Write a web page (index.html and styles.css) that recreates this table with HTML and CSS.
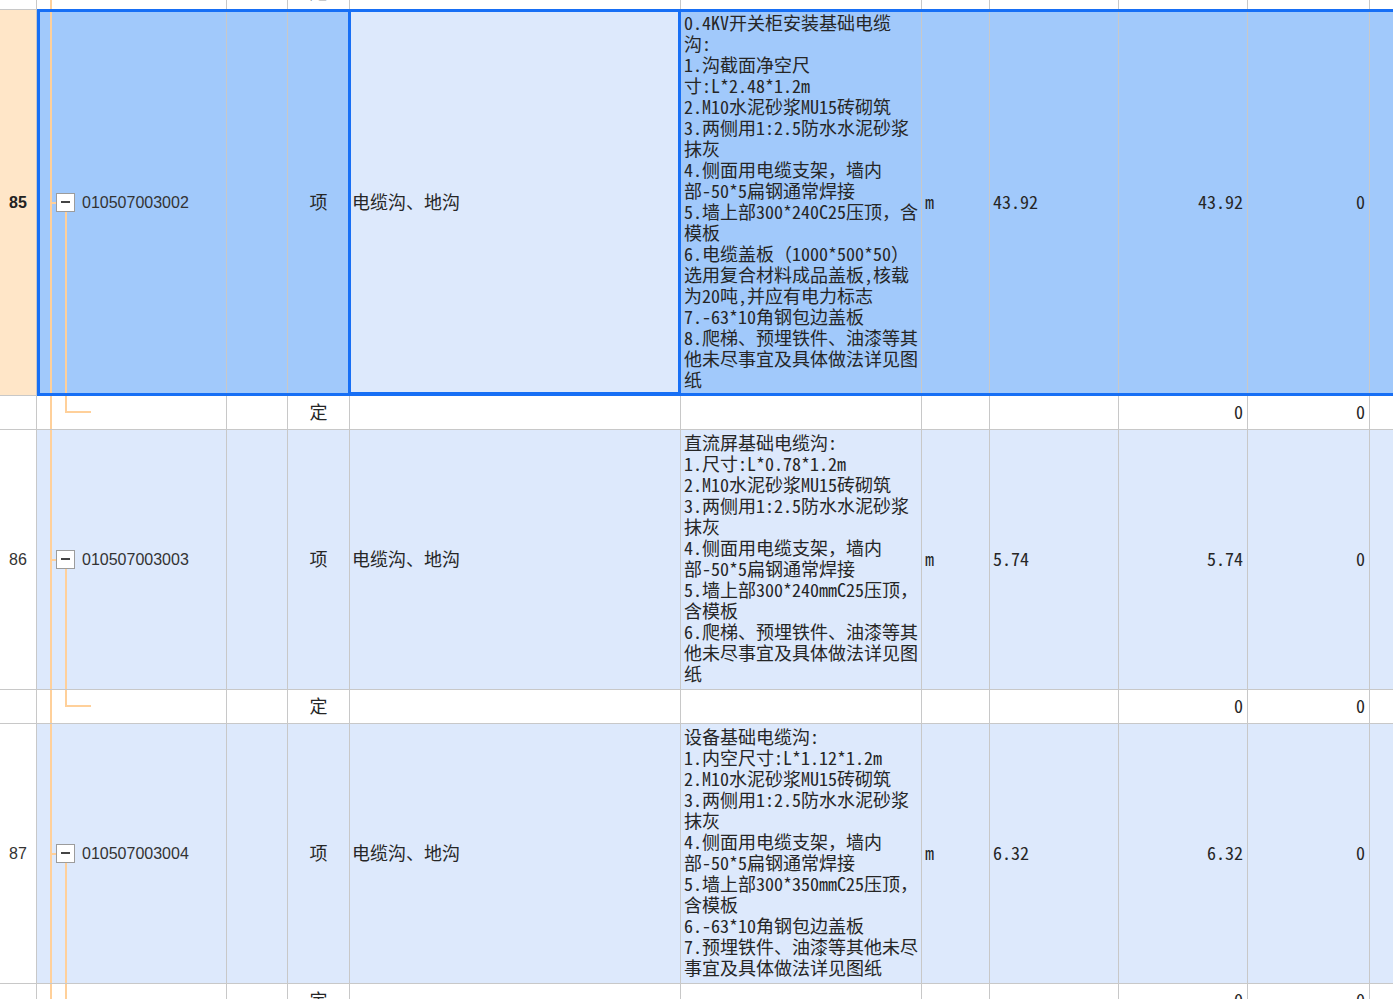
FILE: index.html
```html
<!DOCTYPE html>
<html lang="zh-CN">
<head>
<meta charset="utf-8">
<title>分部分项清单</title>
<link rel="stylesheet" href="styles.css">
</head>
<body>
<div class="sheet">
  <div class="row sub">
    <div class="cell num"></div>
    <div class="cell code"></div>
    <div class="cell"></div>
    <div class="cell type">定</div>
    <div class="cell name"></div>
    <div class="cell desc"></div>
    <div class="cell unit"></div>
    <div class="cell qty"></div>
    <div class="cell val"></div>
    <div class="cell val"></div>
    <div class="cell last"></div>
  </div>

  <div class="row item sel">
    <div class="cell num cur">85</div>
    <div class="cell code"><span class="tog"></span><span>010507003002</span></div>
    <div class="cell"></div>
    <div class="cell type">项</div>
    <div class="cell name focus">电缆沟、地沟</div>
    <div class="cell desc">0.4KV开关柜安装基础电缆<br>沟:<br>1.沟截面净空尺<br>寸:L*2.48*1.2m<br>2.M10水泥砂浆MU15砖砌筑<br>3.两侧用1:2.5防水水泥砂浆<br>抹灰<br>4.侧面用电缆支架，墙内<br>部-50*5扁钢通常焊接<br>5.墙上部300*240C25压顶，含<br>模板<br>6.电缆盖板（1000*500*50）<br>选用复合材料成品盖板,核载<br>为20吨,并应有电力标志<br>7.-63*10角钢包边盖板<br>8.爬梯、预埋铁件、油漆等其<br>他未尽事宜及具体做法详见图<br>纸</div>
    <div class="cell unit">m</div>
    <div class="cell qty">43.92</div>
    <div class="cell val">43.92</div>
    <div class="cell val">0</div>
    <div class="cell last"></div>
  </div>

  <div class="row sub">
    <div class="cell num"></div>
    <div class="cell code"></div>
    <div class="cell"></div>
    <div class="cell type">定</div>
    <div class="cell name"></div>
    <div class="cell desc"></div>
    <div class="cell unit"></div>
    <div class="cell qty"></div>
    <div class="cell val">0</div>
    <div class="cell val">0</div>
    <div class="cell last"></div>
  </div>

  <div class="row item">
    <div class="cell num">86</div>
    <div class="cell code"><span class="tog"></span><span>010507003003</span></div>
    <div class="cell"></div>
    <div class="cell type">项</div>
    <div class="cell name">电缆沟、地沟</div>
    <div class="cell desc">直流屏基础电缆沟:<br>1.尺寸:L*0.78*1.2m<br>2.M10水泥砂浆MU15砖砌筑<br>3.两侧用1:2.5防水水泥砂浆<br>抹灰<br>4.侧面用电缆支架，墙内<br>部-50*5扁钢通常焊接<br>5.墙上部300*240mmC25压顶，<br>含模板<br>6.爬梯、预埋铁件、油漆等其<br>他未尽事宜及具体做法详见图<br>纸</div>
    <div class="cell unit">m</div>
    <div class="cell qty">5.74</div>
    <div class="cell val">5.74</div>
    <div class="cell val">0</div>
    <div class="cell last"></div>
  </div>

  <div class="row sub">
    <div class="cell num"></div>
    <div class="cell code"></div>
    <div class="cell"></div>
    <div class="cell type">定</div>
    <div class="cell name"></div>
    <div class="cell desc"></div>
    <div class="cell unit"></div>
    <div class="cell qty"></div>
    <div class="cell val">0</div>
    <div class="cell val">0</div>
    <div class="cell last"></div>
  </div>

  <div class="row item">
    <div class="cell num">87</div>
    <div class="cell code"><span class="tog"></span><span>010507003004</span></div>
    <div class="cell"></div>
    <div class="cell type">项</div>
    <div class="cell name">电缆沟、地沟</div>
    <div class="cell desc">设备基础电缆沟:<br>1.内空尺寸:L*1.12*1.2m<br>2.M10水泥砂浆MU15砖砌筑<br>3.两侧用1:2.5防水水泥砂浆<br>抹灰<br>4.侧面用电缆支架，墙内<br>部-50*5扁钢通常焊接<br>5.墙上部300*350mmC25压顶，<br>含模板<br>6.-63*10角钢包边盖板<br>7.预埋铁件、油漆等其他未尽<br>事宜及具体做法详见图纸</div>
    <div class="cell unit">m</div>
    <div class="cell qty">6.32</div>
    <div class="cell val">6.32</div>
    <div class="cell val">0</div>
    <div class="cell last"></div>
  </div>

  <div class="row sub">
    <div class="cell num"></div>
    <div class="cell code"></div>
    <div class="cell"></div>
    <div class="cell type">定</div>
    <div class="cell name"></div>
    <div class="cell desc"></div>
    <div class="cell unit"></div>
    <div class="cell qty"></div>
    <div class="cell val">0</div>
    <div class="cell val">0</div>
    <div class="cell last"></div>
  </div>
</div>
</body>
</html>
```

FILE: styles.css
```css
html, body {
  margin: 0;
  padding: 0;
  background: #ffffff;
  overflow: hidden;
}

body {
  width: 1393px;
  height: 999px;
}

.sheet {
  position: relative;
  margin-top: -24px;
  font-family: "Noto Sans Mono CJK SC", "Noto Sans CJK SC", monospace;
  font-size: 18px;
  color: #262626;
}

.row {
  display: grid;
  grid-template-columns: 37px 190px 61px 62px 331px 241px 68px 129px 129px 122px 1fr;
  background: #ffffff;
}

.row.sub {
  height: 34px;
}

.row.item .cell {
  background: #dde9fc;
}

.row.sel {
  position: relative;
}

.row.sel .cell {
  background: #a1c9fb;
}

.row.sel::after {
  content: "";
  position: absolute;
  left: 37px;
  top: -1px;
  right: -10px;
  bottom: 0;
  border: 3px solid #176ff5;
  z-index: 1;
  pointer-events: none;
}

.cell {
  box-sizing: border-box;
  border-right: 1px solid #c8c8c8;
  border-bottom: 1px solid #c8c8c8;
  display: flex;
  align-items: center;
  white-space: nowrap;
  overflow: hidden;
  min-width: 0;
}

.cell.last {
  border-right: none;
}

.row .cell.num {
  justify-content: center;
  font-family: "Liberation Sans", "DejaVu Sans", sans-serif;
  font-size: 16px;
  color: #333;
  background: #ffffff;
}

.row .cell.num.cur {
  background: #ffe6c8;
  font-weight: bold;
  color: #222;
}

.cell.code {
  position: relative;
  padding-left: 19px;
  gap: 7px;
  font-family: "Liberation Sans", "DejaVu Sans", sans-serif;
  font-size: 16px;
  color: #333;
}

.cell.code::before {
  content: "";
  position: absolute;
  left: 13px;
  top: 0;
  bottom: 0;
  width: 2px;
  background: #ffd09a;
}

.row.sub .cell.code::after {
  content: "";
  position: absolute;
  left: 28px;
  top: 0;
  height: 17px;
  width: 26px;
  box-sizing: border-box;
  border-left: 2px solid #ffd09a;
  border-bottom: 2px solid #ffd09a;
}

.tog {
  position: relative;
  flex: none;
  width: 19px;
  height: 19px;
  box-sizing: border-box;
  border: 1px solid #9c9c9c;
  background: #ffffff;
  background-image: linear-gradient(#444, #444);
  background-size: 9px 2px;
  background-position: 4px 7px;
  background-repeat: no-repeat;
}

.tog::before {
  content: "";
  position: absolute;
  left: -6px;
  top: 8px;
  width: 5px;
  height: 2px;
  background: #ffd09a;
}

.tog::after {
  content: "";
  position: absolute;
  left: 8px;
  top: 18px;
  width: 2px;
  height: 400px;
  background: #ffd09a;
}

.cell.type {
  justify-content: center;
  padding-bottom: 3px;
}

.cell.name {
  padding-left: 2px;
  padding-bottom: 3px;
}

.row.sel .cell.name.focus {
  position: relative;
  overflow: visible;
  background: #dde9fc;
}

.cell.name.focus::after {
  content: "";
  position: absolute;
  left: -2px;
  right: -1px;
  top: -1px;
  bottom: 0;
  border: 3px solid #176ff5;
  z-index: 1;
}

.cell.desc {
  display: block;
  padding: 2px 3px 5px 3px;
  line-height: 21px;
}

.cell.unit {
  padding-left: 3px;
  padding-bottom: 3px;
}

.cell.qty {
  padding-left: 3px;
  padding-bottom: 4px;
}

.cell.val {
  justify-content: flex-end;
  padding-right: 4px;
  padding-bottom: 4px;
}
```
